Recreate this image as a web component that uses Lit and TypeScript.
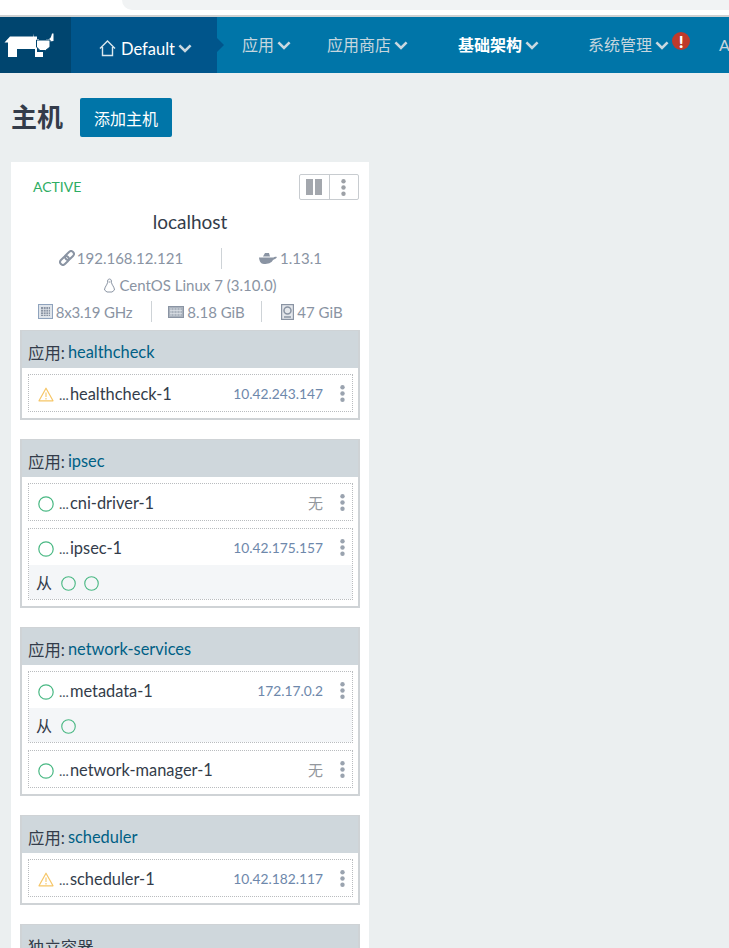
import { LitElement, html, css } from "lit";
import { customElement } from "lit/decorators.js";

const chev = html`<svg class="chev" width="14" height="9" viewBox="0 0 14 9"><path d="M1.4 1.4 7 7 12.600 1.4" fill="none" stroke="#c9d8e0" stroke-width="2.6"/></svg>`;
const circle = (d: number) => html`<svg class="st" width="${d}" height="${d}" viewBox="0 0 16 16"><circle cx="8" cy="8" r="7.200" fill="none" stroke="#49b883" stroke-width="1.200"/></svg>`;
const warn = html`<svg class="st" width="16" height="15" viewBox="0 0 16 15"><path d="M8 1.2 15 13.8H1Z" fill="none" stroke="#f6c667" stroke-width="1.2" stroke-linejoin="round"/><path d="M8 5.5V10M8 11v1.4" stroke="#f6c667" stroke-width="1.1"/></svg>`;
const dots = html`<svg class="dots" width="5" height="17" viewBox="0 0 5 17"><circle cx="2.5" cy="2.3" r="2.2"/><circle cx="2.5" cy="8.5" r="2.2"/><circle cx="2.5" cy="14.7" r="2.2"/></svg>`;

type Row = { n: string; ip: string; st: "ok" | "warn"; side?: number };
type Stack = { name: string; rows: Row[] };
const stacks: Stack[] = [
  { name: "healthcheck", rows: [{ n: "healthcheck-1", ip: "10.42.243.147", st: "warn" }] },
  { name: "ipsec", rows: [{ n: "cni-driver-1", ip: "无", st: "ok" }, { n: "ipsec-1", ip: "10.42.175.157", st: "ok", side: 2 }] },
  { name: "network-services", rows: [{ n: "metadata-1", ip: "172.17.0.2", st: "ok", side: 1 }, { n: "network-manager-1", ip: "无", st: "ok" }] },
  { name: "scheduler", rows: [{ n: "scheduler-1", ip: "10.42.182.117", st: "warn" }] },
];

@customElement("app-root")
export class AppRoot extends LitElement {
  static styles = css`
    :host { display: block; height: 948px; overflow: hidden; background: #ebeff0; font-family: Lato, "Noto Sans CJK SC", sans-serif; color: #333c4a; }
    .chrome { height: 15px; background: #fff; border-bottom: 2px solid #cfd1d2; padding-left: 122px; }
    .pill { width: 607px; height: 10px; background: #f1f3f4; border-radius: 0 0 0 14px; }
    nav { height: 56px; background: #0075a8; display: flex; color: #c6d6de; font-size: 16px; overflow: hidden; white-space: nowrap; }
    nav > * { flex: none; }
    .logo { width: 71px; background: #00456f; display: flex; align-items: flex-start; padding: 16px 0 0 4px; box-sizing: border-box; }
    .env { width: 146px; background: #00558b; position: relative; color: #fff; display: flex; align-items: center; padding: 7px 0 0 28px; gap: 3px; box-sizing: border-box; font-size: 16.5px; }
    .env::after { content: ""; position: absolute; left: 146px; top: 21px; border-left: 7px solid #00558b; border-top: 7px solid transparent; border-bottom: 7px solid transparent; }
    .env .lbl { margin-left: 2px; }
    .item { display: flex; align-items: center; gap: 3px; height: 56px; box-sizing: border-box; }
    .item > span.t { position: relative; top: -1px; }
    .item.on .t { color: #fff; font-weight: 700; }
    .i1 { margin-left: 25px; }
    .i2 { margin-left: 36px; }
    .i3 { margin-left: 50px; }
    .i4 { margin-left: 49px; }
    .i5 { margin-left: 29px; }
    .badge { width: 18px; height: 18px; border-radius: 50%; background: #bf3a2b; color: #fff; margin: -8px 0 0 0; display: flex; align-items: center; justify-content: center; font-weight: 900; font-size: 17px; line-height: 1; }
    .head { display: flex; align-items: center; padding: 25px 0 0 11px; height: 39px; }
    h1 { margin: 0; font-size: 26px; font-weight: 700; color: #333c4a; line-height: 39px; }
    .add { margin-left: 17px; width: 92px; height: 39px; background: #0075a8; color: #fff; font-size: 16px; border: 0; border-radius: 2px; font-family: inherit; padding: 0; }
    .card { margin: 25px 0 0 11px; width: 358px; background: #fff; padding: 13px 10px 0; box-sizing: border-box; height: 800px; }
    .top { display: flex; justify-content: space-between; align-items: flex-start; }
    .active { color: #2ead63; font-size: 14px; padding: 3px 0 0 12px; line-height: 17px; }
    .btns { display: flex; border: 1px solid #c8ccd0; border-radius: 2px; height: 26px; width: 60px; margin-top: -1px; box-sizing: border-box; }
    .btns > div { flex: 1; display: flex; align-items: center; justify-content: center; }
    .btns > div + div { border-left: 1px solid #c8ccd0; }
    .pause { display: flex; gap: 2px; }
    .pause i { width: 7px; height: 16px; background: #a3a7ad; display: block; }
    .btns .dots { fill: #9da1a7; }
    .host { text-align: center; font-size: 19px; line-height: 22px; color: #333c4a; margin-top: 11px; }
    .info { color: #8a94a3; font-size: 15px; display: flex; justify-content: center; align-items: center; line-height: 20px; }
    .info svg { flex: none; }
    .l1 { margin-top: 14px; height: 22px; justify-content: flex-start; }
    .l1 .a { width: 200px; display: flex; justify-content: center; align-items: center; gap: 2px; }
    .l1 .b { width: 138px; display: flex; justify-content: center; align-items: center; gap: 3px; box-sizing: border-box; border-left: 1px solid #ced3d7; height: 21px; }
    .l2 { margin-top: 6px; height: 20px; gap: 3px; }
    .l3 { margin-top: 6px; height: 21px; justify-content: flex-start; }
    .l3 > div { display: flex; align-items: center; justify-content: center; gap: 3px; height: 21px; box-sizing: border-box; }
    .l3 .c1 { width: 130px; padding-right: 2px; letter-spacing: -0.2px; }
    .l3 .c2 { width: 110px; border-left: 1px solid #ced3d7; }
    .l3 .c3 { width: 98px; border-left: 1px solid #ced3d7; padding-left: 3px; }
    .stacks { margin: 8px 0 0 -1px; }
    .stack { border: 2px solid #cfd3d6; border-top-width: 1px; margin-bottom: 19px; padding-bottom: 6px; width: 340px; box-sizing: border-box; }
    .sh { height: 37px; background: #cfd7dc; font-size: 16.4px; display: flex; align-items: center; padding-left: 6px; color: #333c4a; gap: 3px; padding-top: 4px; box-sizing: border-box; }
    .sh a { color: #005f85; }
    .row { margin: 6px 5px 0 6px; border: 1px dotted #b9bcbf; }
    .row + .row { margin-top: 7px; }
    .main { height: 36px; display: flex; align-items: center; padding-left: 9px; padding-right: 7px; }
    .main .st { margin-top: 3px; flex: none; }
    .name { font-size: 16.4px; color: #333c4a; margin-left: 5px; flex: 1; }
    .name span { color: #4a5563; font-size: 14px; margin-right: 1px; }
    .ip { color: #6e88ab; font-size: 13.8px; margin-right: 17px; padding-top: 1px; }
    .ip.none { color: #93979d; font-size: 15px; }
    .main .dots { fill: #9aa3af; flex: none; }
    .sub { height: 34px; background: #f4f6f8; display: flex; align-items: center; padding-left: 7px; gap: 8px; font-size: 16px; color: #333c4a; }
    .sub > span { margin-right: 1px; }
    .sub .st { margin-top: 2px; }
  `;

  row(r: Row) {
    return html`<div class="row">
      <div class="main">
        ${r.st === "ok" ? circle(16) : warn}
        <div class="name"><span>...</span>${r.n}</div>
        <div class="ip ${r.ip === "无" ? "none" : ""}">${r.ip}</div>
        ${dots}
      </div>
      ${r.side ? html`<div class="sub"><span>从</span>${Array.from({ length: r.side }, () => circle(15))}</div>` : ""}
    </div>`;
  }

  render() {
    return html`
      <div class="chrome"><div class="pill"></div></div>
      <nav>
        <div class="logo">
          <svg width="50" height="25" viewBox="0 0 50 25" fill="#fff">
            <path d="M.5 9.500 6 3.500H33V19H39V24H31V16H13V24H4V9.500Z"/>
            <path d="M29 .5 30 6H35V7.500H29Z"/>
            <path d="M42 6.500C46 6.500 47 5 48 .5H49.500V8L42 9Z"/>
            <path d="M32.500 7H46V14L41.500 17.500H36L32.500 14Z" stroke="#00456f" stroke-width="1"/>
          </svg>
        </div>
        <div class="env">
          <svg width="17" height="17" viewBox="0 0 17 17"><path d="M1 8.500 8.500 1 16 8.500M3.500 7V15.500H13.500V7" fill="none" stroke="#dbe8ee" stroke-width="1.400"/></svg>
          <span class="lbl">Default</span>${chev}
        </div>
        <div class="item i1"><span class="t">应用</span>${chev}</div>
        <div class="item i2"><span class="t">应用商店</span>${chev}</div>
        <div class="item i3 on"><span class="t">基础架构</span>${chev}</div>
        <div class="item i4"><span class="t">系统管理</span>${chev}<span class="badge">!</span></div>
        <div class="item i5"><span class="t">API</span></div>
      </nav>
      <div class="head"><h1>主机</h1><button class="add">添加主机</button></div>
      <div class="card">
        <div class="top"><div class="active">ACTIVE</div>
          <div class="btns"><div><span class="pause"><i></i><i></i></span></div><div>${dots}</div></div></div>
        <div class="host">localhost</div>
        <div class="info l1">
          <div class="a"><svg width="16" height="16" viewBox="0 0 16 16" fill="none" stroke="#8a94a3" stroke-width="2"><rect x="0.500" y="7.700" width="10" height="5.600" rx="2.800" transform="rotate(-45 5.500 10.500)"/><rect x="5.500" y="2.700" width="10" height="5.600" rx="2.800" transform="rotate(-45 10.500 5.500)"/></svg>192.168.12.121</div>
          <div class="b"><svg width="18" height="12" viewBox="0 0 18 12" fill="#8a94a3"><path d="M0 5.500H14.500C15 5 16 4.500 18 5 17 7 15 7.500 14 8 12.500 11 9 12 5 12 1.500 12 .3 8.500 0 5.500Z"/><path d="M4 4.500 6 1H10L11 4.500Z"/></svg>1.13.1</div>
        </div>
        <div class="info l2"><svg width="13" height="15" viewBox="0 0 13 15" fill="none" stroke="#8a94a3" stroke-width="1"><path d="M6.500 1C4.800 1 4.500 2.500 4.500 4.500 4.500 6.500 1.500 9 1.500 12L4 14H9L11.500 12C11.500 9 8.500 6.500 8.500 4.500 8.500 2.500 8.200 1 6.500 1Z"/><path d="M5.500 4H7.500"/></svg>CentOS Linux 7 (3.10.0)</div>
        <div class="info l3">
          <div class="c1"><svg width="15" height="15" viewBox="0 0 15 15"><rect x=".5" y=".5" width="14" height="14" fill="#dfe4ea" stroke="#8fa3bd"/><rect x="3" y="3" width="9" height="9" fill="#8a94a3"/><path d="M3 5.500H12M3 8H12M3 10.500H12M5.500 3V12M8 3V12M10.500 3V12" stroke="#dfe4ea" stroke-width=".7"/></svg>8x3.19 GHz</div>
          <div class="c2"><svg width="16" height="12" viewBox="0 0 16 12"><rect x=".5" y=".5" width="15" height="11" fill="#aab2bd" stroke="#8a94a3"/><path d="M3 2V10M6 2V10M9 2V10M12 2V10M2 4.500H14M2 7.500H14" stroke="#dfe4ea" stroke-width=".7"/></svg>8.18 GiB</div>
          <div class="c3"><svg width="13" height="16" viewBox="0 0 13 16"><rect x=".6" y=".6" width="11.800" height="14.800" fill="#e4e7eb" stroke="#8a94a3" stroke-width="1.200"/><circle cx="6.500" cy="6.500" r="3.500" fill="none" stroke="#8a94a3" stroke-width="1.500"/><path d="M3 13H10" stroke="#8a94a3" stroke-width="1.500"/></svg>47 GiB</div>
        </div>
        <div class="stacks">
          ${stacks.map((s) => html`<div class="stack">
            <div class="sh"><span>应用:</span><a>${s.name}</a></div>
            ${s.rows.map((r) => this.row(r))}
          </div>`)}
          <div class="stack"><div class="sh"><span>独立容器</span></div></div>
        </div>
      </div>`;
  }
}
